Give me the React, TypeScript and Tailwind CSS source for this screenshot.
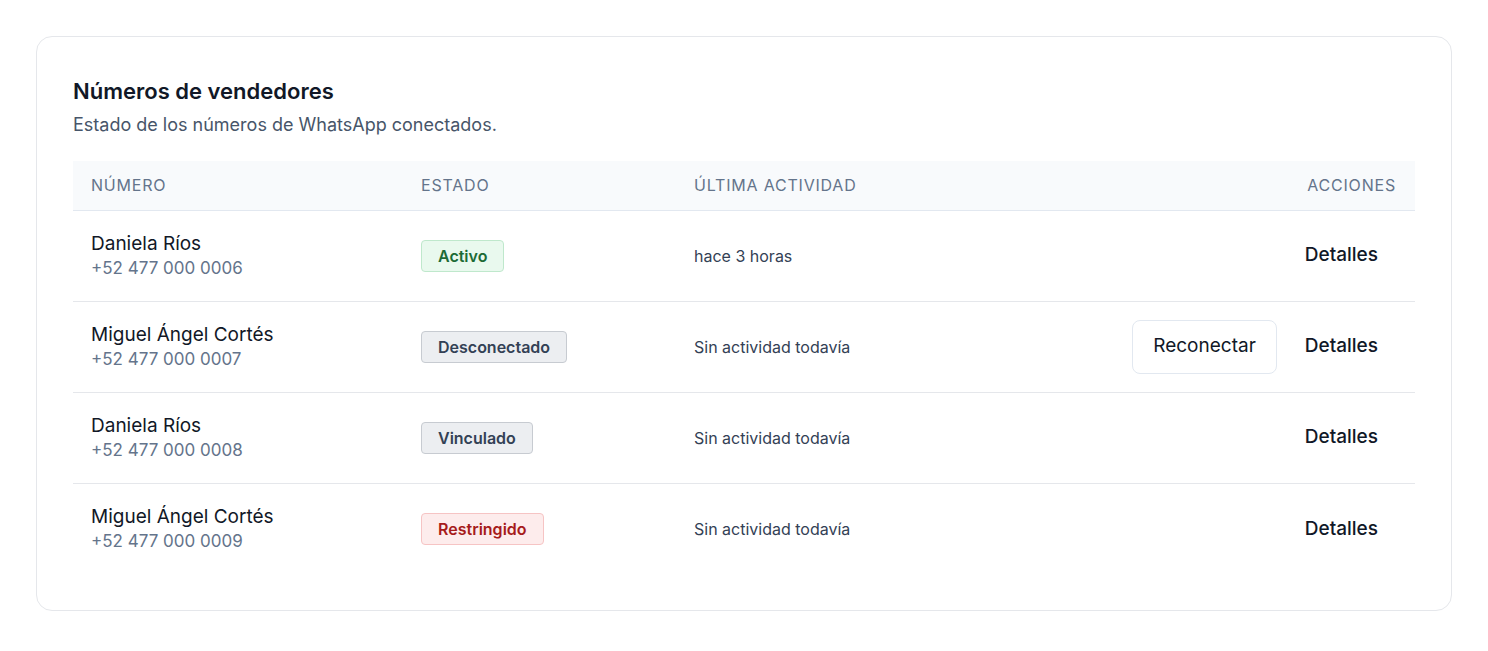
import React from "react";

type Row = { name: string; phone: string; status: string; activity: string; reconnect?: boolean };

const rows: Row[] = [
  { name: "Daniela Ríos", phone: "+52 477 000 0006", status: "Activo", activity: "hace 3 horas" },
  { name: "Miguel Ángel Cortés", phone: "+52 477 000 0007", status: "Desconectado", activity: "Sin actividad todavía", reconnect: true },
  { name: "Daniela Ríos", phone: "+52 477 000 0008", status: "Vinculado", activity: "Sin actividad todavía" },
  { name: "Miguel Ángel Cortés", phone: "+52 477 000 0009", status: "Restringido", activity: "Sin actividad todavía" },
];

const badgeClass: Record<string, string> = {
  Activo: "bg-[#e9f9ee] border-[#bfe8cc] text-[#1c6b35]",
  Desconectado: "bg-[#eceef1] border-[#c7cbd1] text-[#334155]",
  Vinculado: "bg-[#eceef1] border-[#c7cbd1] text-[#334155]",
  Restringido: "bg-[#fdecec] border-[#f6c4c4] text-[#a61b1b]",
};

export default function App() {
  return (
    <div className="min-h-screen bg-white p-9 font-[Inter,sans-serif]">
      <div className="rounded-2xl border border-[#e5e7eb] px-9 pt-[40px] pb-9">
        <h2 className="text-[22px] leading-7 font-semibold text-[#111827]">Números de vendedores</h2>
        <p className="mt-[6px] text-[18px] leading-7 text-[#475569]">Estado de los números de WhatsApp conectados.</p>
        <table className="mt-[22px] w-full border-collapse">
          <thead>
            <tr className="h-[49px] bg-[#f8fafc] border-b border-[#e2e8f0] text-[16px] tracking-wider text-[#64748b] uppercase">
              <th className="w-[330px] pl-[18px] text-left font-normal">Número</th>
              <th className="w-[273px] pl-[18px] text-left font-normal">Estado</th>
              <th className="pl-[18px] text-left font-normal">Última actividad</th>
              <th className="pr-[19px] text-right font-normal">Acciones</th>
            </tr>
          </thead>
          <tbody>
            {rows.map((r, i) => (
              <tr key={i} className={`h-[91px] ${i < rows.length - 1 ? "border-b border-[#e5e7eb]" : ""}`}>
                <td className="pl-[18px]">
                  <div className="text-[19px] leading-6 text-[#111827]">{r.name}</div>
                  <div className="text-[17px] leading-6 text-[#64748b]">{r.phone}</div>
                </td>
                <td className="pl-[18px]">
                  <span className={`inline-block rounded border px-4 py-[3px] text-[16px] font-semibold ${badgeClass[r.status]}`}>
                    {r.status}
                  </span>
                </td>
                <td className="pl-[18px] text-[16px] text-[#334155]">{r.activity}</td>
                <td className="pr-[37px]">
                  <div className="flex items-center justify-end gap-7">
                    {r.reconnect && (
                      <button className="h-[54px] rounded-lg border border-[#e2e8f0] bg-white px-5 text-[19px] text-[#111827]">
                        Reconectar
                      </button>
                    )}
                    <span className="text-[19px] font-medium text-[#111827]">Detalles</span>
                  </div>
                </td>
              </tr>
            ))}
          </tbody>
        </table>
      </div>
    </div>
  );
}
